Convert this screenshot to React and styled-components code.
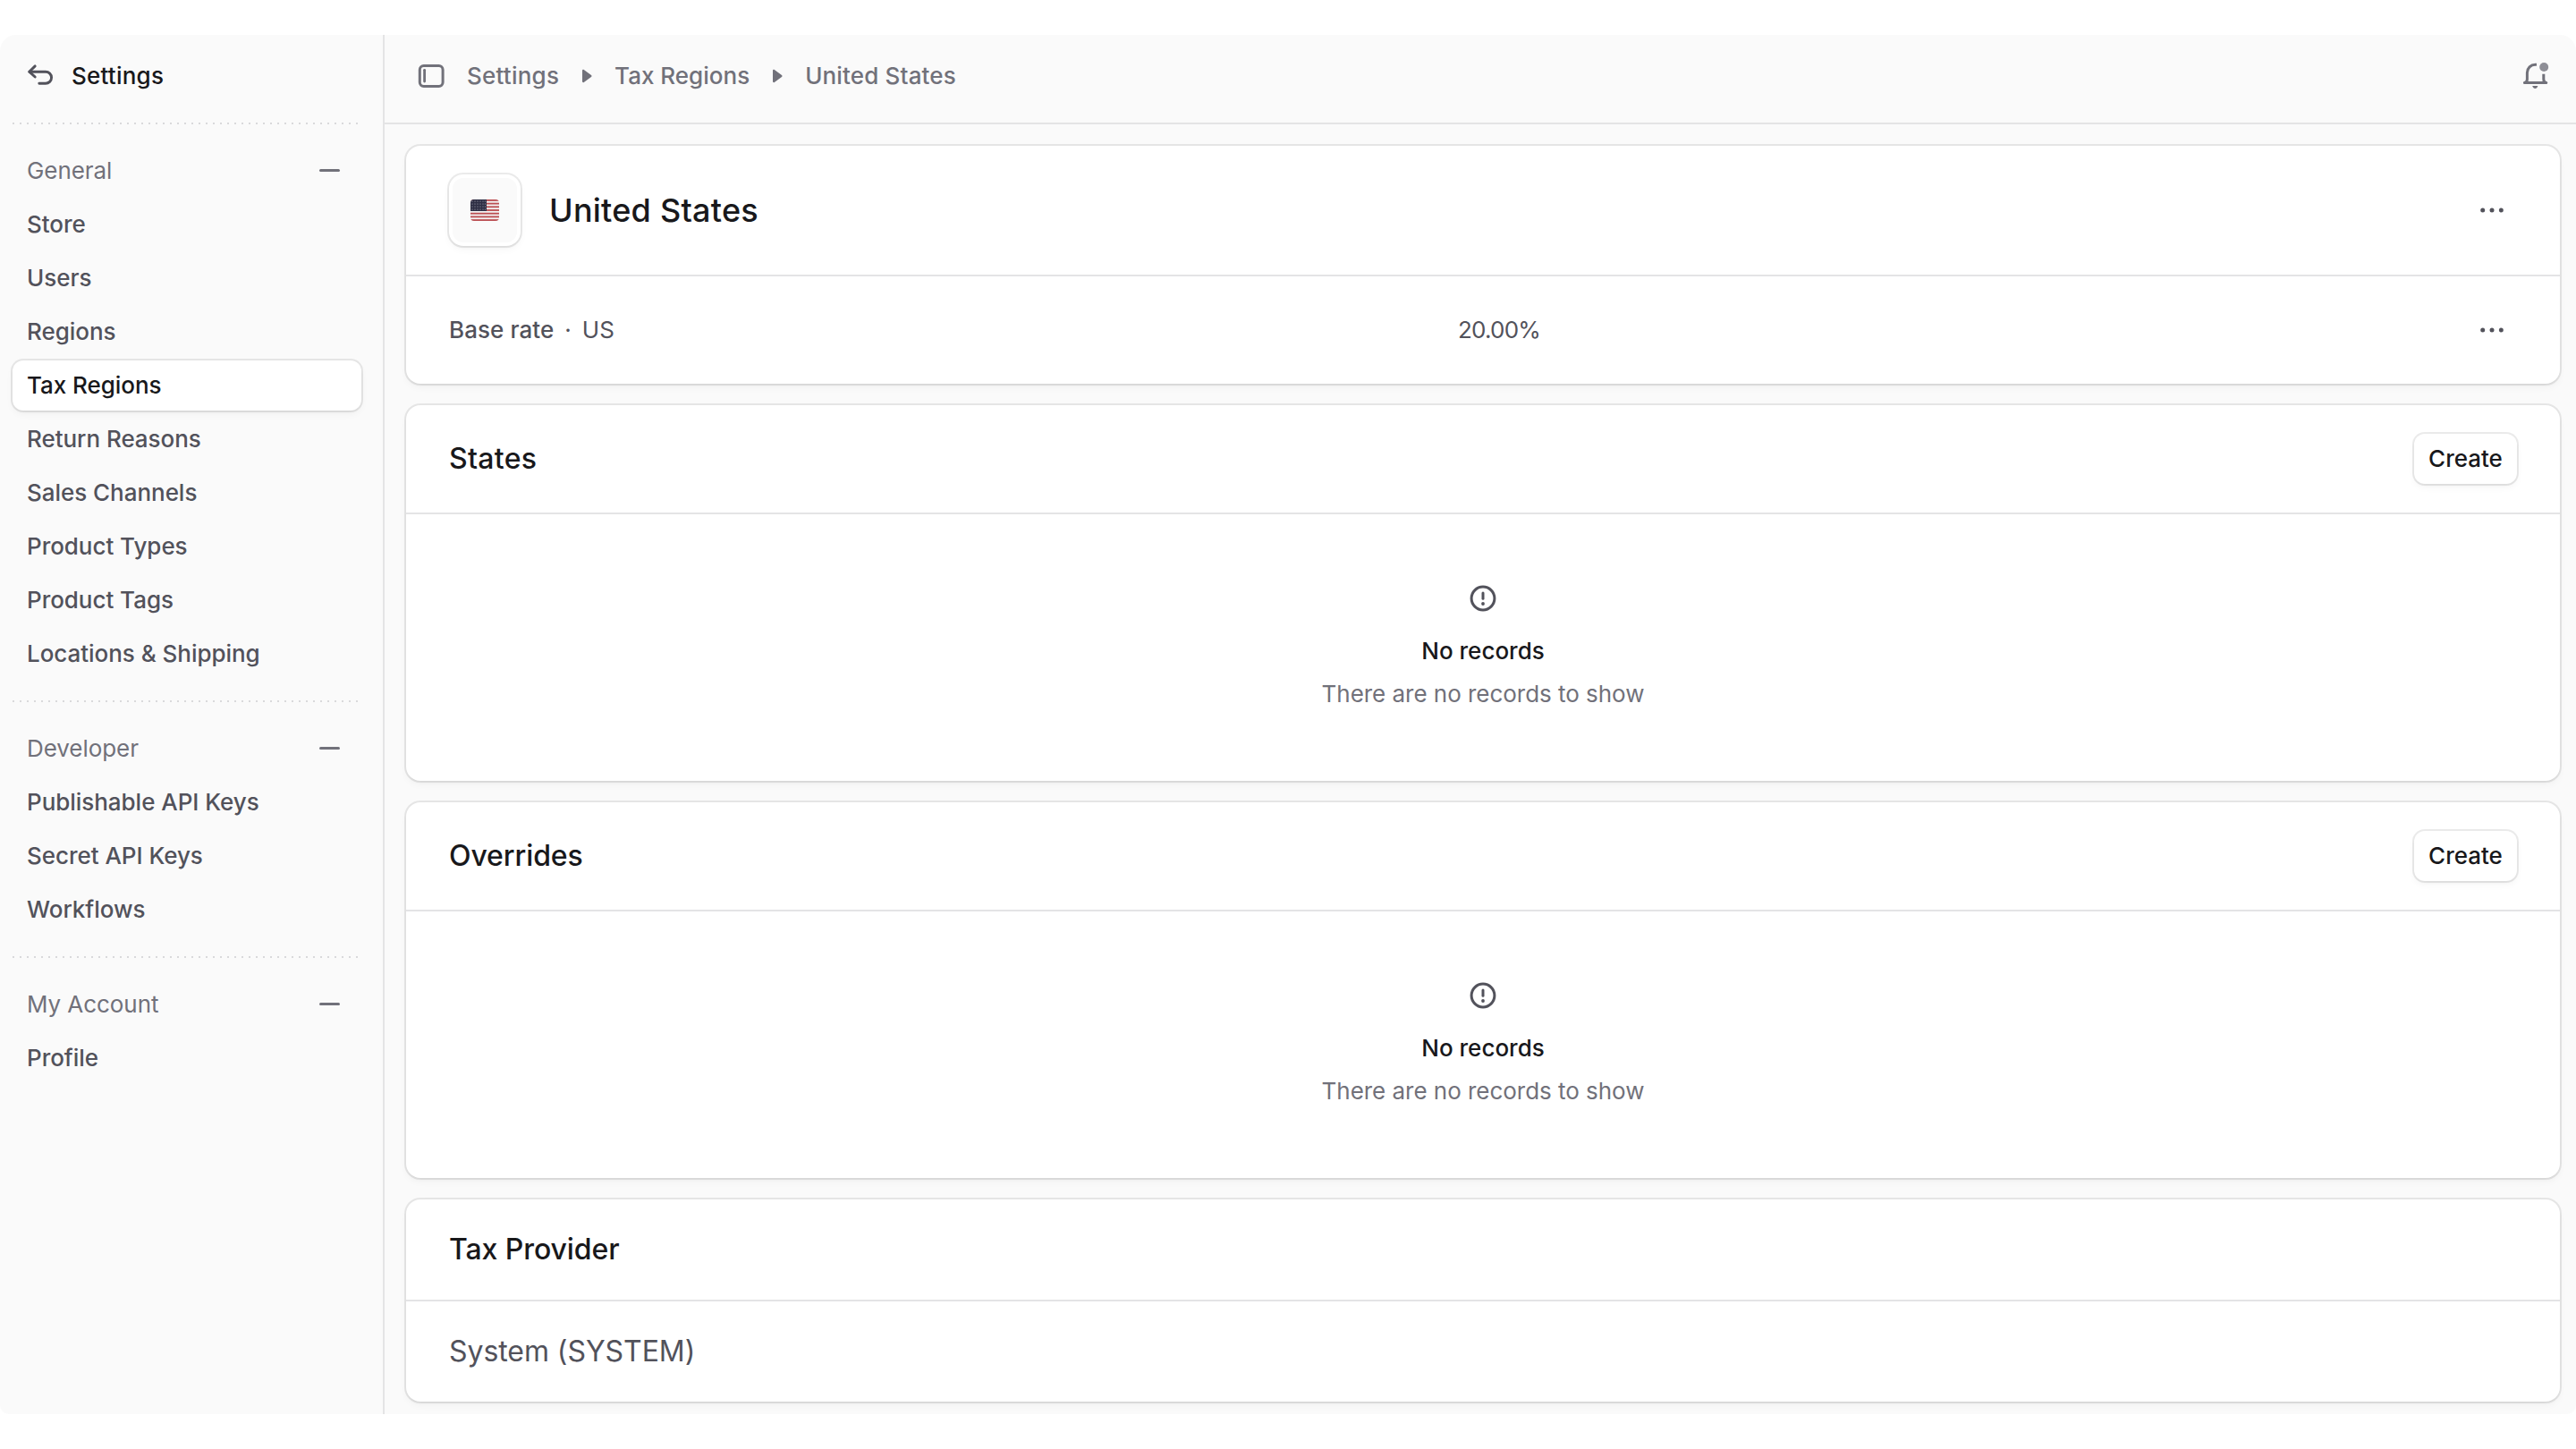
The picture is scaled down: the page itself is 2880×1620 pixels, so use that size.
import React from 'react'
import styled, { createGlobalStyle } from 'styled-components'

const generalLinks = [
    'Store',
    'Users',
    'Regions',
    'Tax Regions',
    'Return Reasons',
    'Sales Channels',
    'Product Types',
    'Product Tags',
    'Locations & Shipping',
]
const developerLinks = ['Publishable API Keys', 'Secret API Keys', 'Workflows']
const accountLinks = ['Profile']

function BackIcon() {
    return (
        <svg width='30' height='30' viewBox='0 0 30 30' fill='none' stroke='#52525b' strokeWidth='2.9' strokeLinecap='round' strokeLinejoin='round'>
            <path d='M9.2 3.9 2.7 10.2 9.2 16' />
            <path d='M3 10.2h18a6.5 6.5 0 0 1 0 13.1H13.8' />
        </svg>
    )
}

function SidebarIcon() {
    return (
        <svg width='30' height='30' viewBox='0 0 30 30' fill='none' stroke='#71717a' strokeLinecap='round'>
            <rect x='2.3' y='3.5' width='25.8' height='23' rx='4.4' strokeWidth='3' />
            <path d='M7.6 8.3v12.8' strokeWidth='2.8' />
        </svg>
    )
}

function BellIcon() {
    return (
        <svg width='30' height='30' viewBox='0 0 30 30' fill='none' stroke='#71717a' strokeWidth='3' strokeLinecap='round' strokeLinejoin='round'>
            <path d='M16 2.2h-1.6a9 9 0 0 0-9 9v7.4c0 2-.8 3.8-3 4h24.4c-2.2-.2-3-2-3-4V12.8' strokeLinecap='butt' />
            <path d='M11.2 26h6.2c-.6 2-1.8 3-3.1 3s-2.5-1-3.1-3z' fill='#71717a' stroke='none' />
            <circle cx='24.2' cy='5' r='5' fill='#8e8e96' stroke='none' />
        </svg>
    )
}

function RecordIcon() {
    return (
        <svg width='30' height='30' viewBox='0 0 30 30' fill='none' stroke='#52525b' strokeWidth='3' strokeLinecap='round'>
            <circle cx='15' cy='15' r='12.9' />
            <path d='M15 8.9v6.4' />
            <circle cx='15' cy='21' r='1.9' fill='#52525b' stroke='none' />
        </svg>
    )
}

function Triangle() {
    return (
        <svg width='12' height='16' viewBox='0 0 12 16'>
            <path d='M1 1.9v12.2c0 1 1 1.5 1.8.9l8.2-6c.7-.5.7-1.5 0-2L2.8 1C2 .4 1 .9 1 1.9z' fill='#71717a' />
        </svg>
    )
}

function Dots() {
    return (
        <svg width='30' height='30' viewBox='0 0 30 30' fill='#52525b'>
            <circle cx='4.7' cy='15' r='2.5' />
            <circle cx='15' cy='15' r='2.5' />
            <circle cx='25.3' cy='15' r='2.5' />
        </svg>
    )
}

function Flag() {
    const stripes = [0, 2, 4, 6, 8, 10, 12]
    const stars = [2, 5, 8, 11]
    return (
        <FlagSvg width='32' height='24' viewBox='0 0 32 24'>
            <rect width='32' height='24' fill='#f4f4f4' />
            {stripes.map((s) => (
                <rect key={s} y={(s * 24) / 13} width='32' height={24 / 13} fill='#bb4f53' />
            ))}
            <rect width='18' height='13' fill='#2e2e44' />
            {stars.map((y) => stars.concat(14, 16.4).map((x) => (
                <circle key={`${x}-${y}`} cx={x} cy={y} r='0.6' fill='#b4b4c0' />
            )))}
        </FlagSvg>
    )
}

function NavGroup({ title, links }) {
    return (
        <Group>
            <GroupHead>
                {title}
                <Minus />
            </GroupHead>
            {links.map((link) => (
                <NavItem key={link} $active={link === 'Tax Regions'}>{link}</NavItem>
            ))}
        </Group>
    )
}

function EmptySection({ title, tracking }) {
    return (
        <Card>
            <CardHeader $height={120}>
                <Heading $tracking={tracking}>{title}</Heading>
                <Button>Create</Button>
            </CardHeader>
            <Empty>
                <RecordIcon />
                <EmptyTitle>No records</EmptyTitle>
                <EmptyText>There are no records to show</EmptyText>
            </Empty>
        </Card>
    )
}

function App() {
    return (
        <>
            <GlobalStyle />
            <Frame>
                <Sidebar>
                    <SidebarHeader>
                        <BackIcon />
                        Settings
                    </SidebarHeader>
                    <Dotted />
                    <NavGroup title='General' links={generalLinks} />
                    <Dotted />
                    <NavGroup title='Developer' links={developerLinks} />
                    <Dotted />
                    <NavGroup title='My Account' links={accountLinks} />
                </Sidebar>
                <Main>
                    <Topbar>
                        <SidebarIcon />
                        <Breadcrumbs>
                            <Crumb $tracking={0.22}>Settings</Crumb>
                            <Triangle />
                            <Crumb>Tax Regions</Crumb>
                            <Triangle />
                            <Crumb $tracking={0.16}>United States</Crumb>
                        </Breadcrumbs>
                        <BellIcon />
                    </Topbar>
                    <Content>
                        <Card>
                            <CardHeader $height={144}>
                                <Country>
                                    <FlagBox>
                                        <FlagInner><Flag /></FlagInner>
                                    </FlagBox>
                                    <Title>United States</Title>
                                </Country>
                                <IconButton><Dots /></IconButton>
                            </CardHeader>
                            <RateRow>
                                <Rate>
                                    <strong>Base rate</strong>
                                    <span>·</span>
                                    <span>US</span>
                                </Rate>
                                <Percent>20.00%</Percent>
                                <IconButton><Dots /></IconButton>
                            </RateRow>
                        </Card>
                        <EmptySection title='States' tracking={0.3} />
                        <EmptySection title='Overrides' tracking={-0.1} />
                        <Card>
                            <CardHeader $height={112}>
                                <Heading $tracking={-0.08}>Tax Provider</Heading>
                            </CardHeader>
                            <Provider>System (SYSTEM)</Provider>
                        </Card>
                    </Content>
                </Main>
            </Frame>
        </>
    )
}

export default App

const cardShadow = '0 0 0 2px rgba(0,0,0,0.08), 0 2px 4px -2px rgba(0,0,0,0.08), 0 4px 8px 0 rgba(0,0,0,0.04)'

const GlobalStyle = createGlobalStyle`
    * {
        box-sizing: border-box;
    }
    body {
        margin: 0;
        background: #fff;
        font-family: Inter, sans-serif;
        font-size: 26px;
        line-height: 40px;
        color: #18181b;
    }
    svg {
        display: block;
        flex-shrink: 0;
    }
`

const Frame = styled.div`
    display: flex;
    height: 1542px;
    margin: 39px 0;
    background: #fafafa;
    border-radius: 18px 18px 10px 10px;
    overflow: hidden;
`

const Sidebar = styled.aside`
    width: 430px;
    padding: 0 24px 0 14px;
    border-right: 2px solid #e4e4e5;
`

const SidebarHeader = styled.div`
    display: flex;
    align-items: center;
    gap: 20px;
    height: 98px;
    padding: 0 16px 6px;
    font-weight: 500;
    letter-spacing: 0.22px;
`

const Dotted = styled.div`
    height: 2px;
    width: 390px;
    background: repeating-linear-gradient(to right, #d9d9db 0 2px, transparent 2px 8px);
`

const Group = styled.nav`
    display: flex;
    flex-direction: column;
    gap: 4px;
    width: 390px;
    padding: 24px 0;
`

const GroupHead = styled.div`
    display: flex;
    align-items: center;
    justify-content: space-between;
    height: 56px;
    padding: 0 24px 0 16px;
    color: #71717a;
    letter-spacing: -0.06px;
`

const Minus = styled.span`
    width: 23px;
    height: 3px;
    margin-bottom: 1px;
    border-radius: 2px;
    background: #71717a;
`

const NavItem = styled.a`
    height: 56px;
    padding: 8px 16px;
    border-radius: 12px;
    font-weight: 500;
    letter-spacing: -0.04px;
    color: ${(p) => (p.$active ? '#18181b' : '#52525b')};
    background: ${(p) => (p.$active ? '#fff' : 'transparent')};
    box-shadow: ${(p) => (p.$active ? cardShadow : 'none')};
`

const Main = styled.main`
    flex: 1;
    min-width: 0;
`

const Topbar = styled.header`
    display: flex;
    align-items: center;
    height: 100px;
    padding: 0 30px 6px 37px;
    border-bottom: 2px solid #e4e4e5;
    color: #71717a;
    font-weight: 500;
`

const Breadcrumbs = styled.div`
    display: flex;
    align-items: center;
    gap: 25px;
    flex: 1;
    margin-left: 25px;
`

const Crumb = styled.span`
    letter-spacing: ${(p) => p.$tracking || 0}px;
`

const Content = styled.div`
    display: flex;
    flex-direction: column;
    gap: 24px;
    padding: 24px 18px 14px 24px;
`

const Card = styled.section`
    background: #fff;
    border-radius: 16px;
    box-shadow: ${cardShadow};
`

const CardHeader = styled.div`
    display: flex;
    align-items: center;
    justify-content: space-between;
    height: ${(p) => p.$height + 2}px;
    padding: 0 48px;
    border-bottom: 2px solid #e4e4e5;
`

const Country = styled.div`
    display: flex;
    align-items: center;
    gap: 32px;
`

const FlagBox = styled.div`
    width: 80px;
    height: 80px;
    padding: 4px;
    border-radius: 16px;
    background: #fff;
    box-shadow: ${cardShadow};
`

const FlagInner = styled.div`
    display: flex;
    align-items: center;
    justify-content: center;
    height: 72px;
    border-radius: 12px;
    background: #fafafa;
`

const FlagSvg = styled.svg`
    border-radius: 4px;
`

const Title = styled.h1`
    margin: 0;
    font-size: 36px;
    font-weight: 500;
    letter-spacing: 0.24px;
`

const Heading = styled.h2`
    margin: 0;
    font-size: 32px;
    font-weight: 500;
    letter-spacing: ${(p) => p.$tracking || 0}px;
`

const IconButton = styled.div`
    display: flex;
    align-items: center;
    justify-content: center;
    width: 56px;
    height: 56px;
`

const RateRow = styled.div`
    display: grid;
    grid-template-columns: 1fr 1fr 56px;
    gap: 24px;
    align-items: center;
    height: 120px;
    padding: 0 48px;
    color: #52525b;
`

const Rate = styled.div`
    display: flex;
    gap: 12px;
    strong {
        font-weight: 500;
        letter-spacing: 0.08px;
    }
`

const Percent = styled.span`
    letter-spacing: -0.8px;
`

const Button = styled.button`
    width: 115px;
    height: 56px;
    padding: 0;
    border: none;
    border-radius: 12px;
    background: #fff;
    box-shadow: ${cardShadow};
    color: #18181b;
    font: inherit;
    font-weight: 500;
`

const Empty = styled.div`
    display: flex;
    flex-direction: column;
    align-items: center;
    height: 298px;
    padding-top: 79px;
`

const EmptyTitle = styled.p`
    margin: 24px 0 8px;
    font-weight: 500;
`

const EmptyText = styled.p`
    margin: 0;
    color: #71717a;
    letter-spacing: -0.03px;
`

const Provider = styled.div`
    display: flex;
    align-items: center;
    height: 112px;
    padding: 0 48px;
    font-size: 32px;
    letter-spacing: -0.06px;
    color: #52525b;
`
